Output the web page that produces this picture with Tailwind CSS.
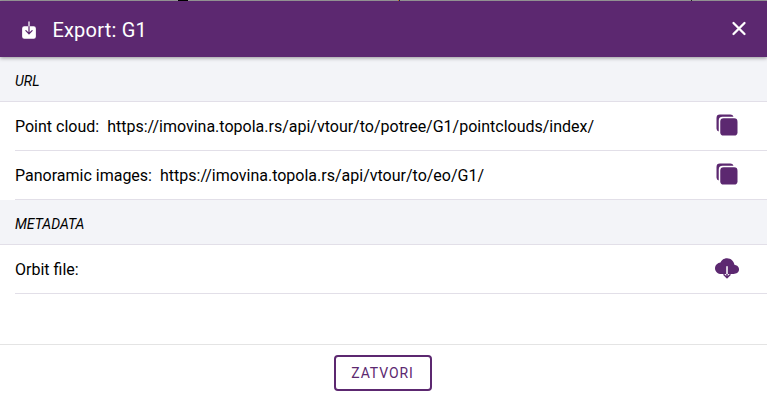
<!DOCTYPE html>
<html lang="sr">
<head>
<meta charset="utf-8">
<title>Export: G1</title>
<script src="https://cdn.jsdelivr.net/npm/@tailwindcss/browser@4"></script>
</head>
<body class="h-[401px] w-[767px] overflow-hidden bg-white font-[Roboto,sans-serif] text-base text-black">
<svg width="0" height="0" class="absolute">
  <symbol id="copy" viewBox="0 0 512 512"><path d="M408 480H184a72 72 0 01-72-72V184a72 72 0 0172-72h224a72 72 0 0172 72v224a72 72 0 01-72 72z"/><path d="M160 80h235.88A72.12 72.12 0 00328 32H104a72 72 0 00-72 72v224a72.12 72.12 0 0048 67.88V160a80 80 0 0180-80z"/></symbol>
</svg>
<div class="flex h-full flex-col">
  <div class="flex h-px shrink-0 bg-[#a0a0a0]">
    <div class="ml-[178px] h-px w-[10px] bg-black"></div>
    <div class="ml-[210px] h-px w-px bg-[#d97a20]"></div>
    <div class="h-px w-px bg-[#173450]"></div>
    <div class="ml-[291px] h-px w-px bg-[#222]"></div>
  </div>
  <header class="relative z-10 flex h-14 shrink-0 items-center bg-[#5c2870] pr-[18px] pl-[19px] text-white shadow-[0_1px_4px_rgba(0,0,0,0.4)]">
    <svg class="mt-0.5 size-5" viewBox="0 0 512 512" fill="currentColor"><path d="M376 160H272v153.37l52.69-52.68a16 16 0 0122.62 22.62l-80 80a16 16 0 01-22.62 0l-80-80a16 16 0 0122.62-22.62L240 313.37V160H136a56.06 56.06 0 00-56 56v208a56.06 56.06 0 0056 56h240a56.06 56.06 0 0056-56V216a56.06 56.06 0 00-56-56zM272 48a16 16 0 00-32 0v112h32z"/></svg>
    <h1 class="ml-[13.4px] grow pt-0.5 text-xl tracking-[0.22px]">Export: G1</h1>
    <svg class="mb-px size-5" viewBox="0 0 20 20" fill="none" stroke="currentColor" stroke-width="2.3" stroke-linecap="round"><path d="M4.5 4l11 11M15.5 4l-11 11"/></svg>
  </header>
  <main class="grow">
    <h2 class="flex h-[45px] items-center border-b border-[#e2dfe8] bg-[#f3f4f8] pt-[3px] pl-[15px] text-sm italic">URL</h2>
    <div class="ml-[15px] flex h-[49px] items-center border-b border-[#e2dfe8] pr-7">
      <span class="pt-0.5">Point cloud:</span><span class="ml-2 grow pt-0.5">https://imovina.topola.rs/api/vtour/to/potree/G1/pointclouds/index/</span>
      <svg class="mb-0.5 size-6 fill-[#5c2870]"><use href="#copy"/></svg>
    </div>
    <div class="ml-[15px] flex h-[49px] items-center border-b border-[#e2dfe8] pr-7">
      <span class="pt-0.5">Panoramic images:</span><span class="ml-2 grow pt-0.5">https://imovina.topola.rs/api/vtour/to/eo/G1/</span>
      <svg class="mb-0.5 size-6 fill-[#5c2870]"><use href="#copy"/></svg>
    </div>
    <h2 class="flex h-[45px] items-center border-b border-[#e2dfe8] bg-[#f3f4f8] pt-[3px] pl-[15px] text-sm italic">METADATA</h2>
    <div class="ml-[15px] flex h-[49px] items-center border-b border-[#e2dfe8] pr-7">
      <span class="grow pt-0.5">Orbit file:</span>
      <svg class="mb-0.5 size-6 fill-[#5c2870]" viewBox="0 0 512 512"><path d="M473.66 210c-16.56-12.3-37.7-20.75-59.52-24-6.62-39.18-24.21-72.67-51.3-97.45C334.15 62.25 296.21 47.79 256 47.79c-35.35 0-68 11.08-94.37 32.05a149.61 149.61 0 00-45.29 60c-29.94 4.6-57.12 16.68-77.39 34.55C13.46 197.33 0 227.24 0 261.39c0 34.52 14.49 66 40.79 88.76 25.12 21.69 58.94 33.64 95.21 33.64h104V230.42c0-9 7.08-16.21 16-16.42a16 16 0 0116.3 16v153.79h124c31.34 0 59.91-8.8 80.45-24.77 23.26-18.1 35.55-44 35.55-74.83 0-29.94-13.26-55.61-38.64-74.19zM240 425.42l-36.7-36.64a16 16 0 00-22.6 22.65l64 63.89a16 16 0 0022.6 0l64-63.89a16 16 0 00-22.6-22.65L272 425.42v-41.63h-32z"/></svg>
    </div>
  </main>
  <footer class="flex h-[57px] shrink-0 justify-center border-t border-[#e4e4e4] pt-[10px] pr-[2px]">
    <button class="h-9 w-[98px] rounded border-2 border-[#5c2870] text-sm tracking-[0.9px] text-[#5c2870]">ZATVORI</button>
  </footer>
</div>
</body>
</html>
